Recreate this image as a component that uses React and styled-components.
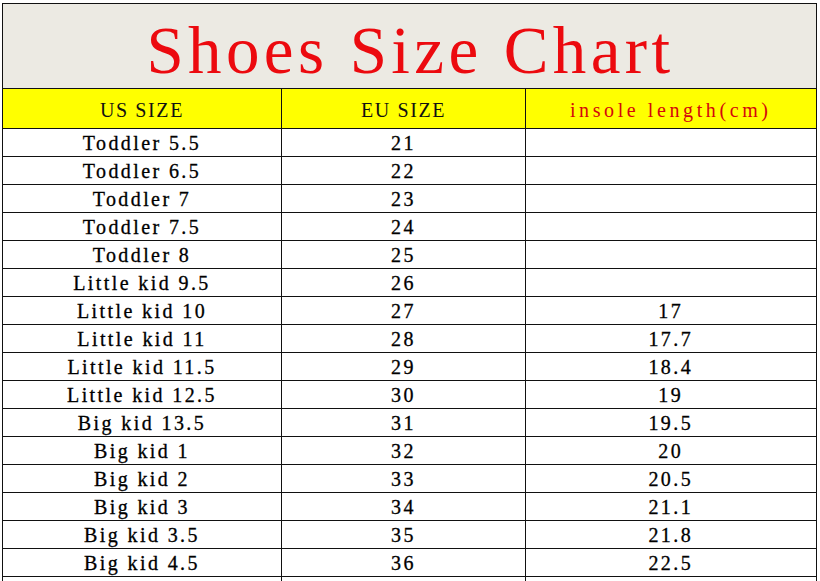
import React from 'react';
import styled, { createGlobalStyle } from 'styled-components';

const rows = [
  ['Toddler 5.5', '21', ''],
  ['Toddler 6.5', '22', ''],
  ['Toddler 7', '23', ''],
  ['Toddler 7.5', '24', ''],
  ['Toddler 8', '25', ''],
  ['Little kid 9.5', '26', ''],
  ['Little kid 10', '27', '17'],
  ['Little kid 11', '28', '17.7'],
  ['Little kid 11.5', '29', '18.4'],
  ['Little kid 12.5', '30', '19'],
  ['Big kid 13.5', '31', '19.5'],
  ['Big kid 1', '32', '20'],
  ['Big kid 2', '33', '20.5'],
  ['Big kid 3', '34', '21.1'],
  ['Big kid 3.5', '35', '21.8'],
  ['Big kid 4.5', '36', '22.5'],
  ['', '', ''],
];

const App = () => {
  return (
    <>
      <GlobalStyle />
      <Sheet>
        <Title>Shoes Size Chart</Title>
        <Grid>
          <HeadCell>US SIZE</HeadCell>
          <HeadCell>EU SIZE</HeadCell>
          <HeadCell red>insole length(cm)</HeadCell>
          {rows.map((row, i) =>
            row.map((value, j) => (
              <Cell key={`${i}-${j}`}>{value}</Cell>
            ))
          )}
        </Grid>
      </Sheet>
    </>
  );
};

export default App;

const GlobalStyle = createGlobalStyle`
  html, body {
    margin: 0;
    padding: 0;
    background: #fff;
    overflow: hidden;
  }
  body {
    font-family: "Liberation Serif", "Times New Roman", serif;
  }
`;

const Sheet = styled.div`
  margin: 3px 0 0 2px;
  width: 815px;
  border-top: 1.5px solid #111;
  border-left: 1.5px solid #111;
  box-sizing: border-box;
`;

const Title = styled.div`
  height: 85px;
  box-sizing: border-box;
  border-bottom: 1.5px solid #111;
  border-right: 1.5px solid #111;
  background: #eceae3;
  color: #ec0a0f;
  font-size: 67px;
  letter-spacing: 4.4px;
  display: flex;
  align-items: center;
  justify-content: center;
  padding-top: 8px;
  padding-left: 2px;
`;

const Grid = styled.div`
  display: grid;
  grid-template-columns: 279px 244px 290.5px;
`;

const HeadCell = styled.div`
  height: 40px;
  box-sizing: border-box;
  background: #ffff00;
  border-right: 1.5px solid #111;
  border-bottom: 1.5px solid #111;
  color: ${(props) => (props.red ? '#d4060c' : '#111')};
  font-size: 20px;
  letter-spacing: ${(props) => (props.red ? '3.6px' : '1.6px')};
  display: flex;
  align-items: center;
  justify-content: center;
  padding-top: 3px;
`;

const Cell = styled.div`
  height: 28px;
  box-sizing: border-box;
  border-right: 1.5px solid #111;
  border-bottom: 1.5px solid #111;
  color: #000;
  font-size: 20px;
  letter-spacing: 2.4px;
  -webkit-text-stroke: 0.3px #000;
  display: flex;
  align-items: center;
  justify-content: center;
  padding-top: 2px;
`;
